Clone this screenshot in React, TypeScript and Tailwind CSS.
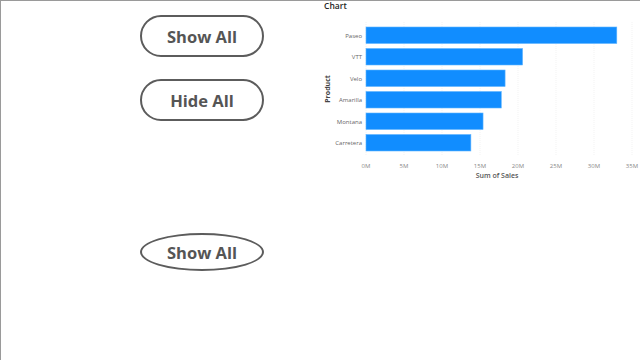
import React from 'react';

const products = [
  { name: 'Paseo', value: 33.0 },
  { name: 'VTT', value: 20.6 },
  { name: 'Velo', value: 18.3 },
  { name: 'Amarilla', value: 17.8 },
  { name: 'Montana', value: 15.4 },
  { name: 'Carretera', value: 13.8 },
];

const ticks = [0, 5, 10, 15, 20, 25, 30, 35];
const pxPerM = 7.6;
const x0 = 46;

function SalesChart() {
  return (
    <svg width="320" height="190" viewBox="0 0 320 190" className="block">
      <text x="4" y="9" fontSize="8.5" fontWeight="600" fill="#252423" fontFamily="'Open Sans', sans-serif">
        Chart
      </text>

      {/* gridlines */}
      {ticks.map((t) => (
        <line
          key={t}
          x1={x0 + t * pxPerM}
          x2={x0 + t * pxPerM}
          y1="22"
          y2="156"
          stroke="#f0f0f0"
          strokeWidth="0.8"
          strokeDasharray="1 1"
        />
      ))}

      {products.map((p, i) => {
        const y = 27 + i * 21.5;
        return (
          <g key={p.name}>
            <rect x={x0} y={y} width={p.value * pxPerM} height="16.5" fill="#118dff" stroke="#5fb4ff" strokeWidth="0.6" />
            <text
              x="42"
              y={y + 10.5}
              fontSize="6"
              fill="#666"
              textAnchor="end"
              fontFamily="'Open Sans', sans-serif"
            >
              {p.name}
            </text>
          </g>
        );
      })}

      {ticks.map((t) => (
        <text
          key={t}
          x={x0 + t * pxPerM}
          y="168"
          fontSize="6"
          fill="#888"
          textAnchor="middle"
          fontFamily="'Open Sans', sans-serif"
        >
          {t}M
        </text>
      ))}

      <text x="177" y="178" fontSize="7" fontWeight="600" fill="#555" textAnchor="middle" fontFamily="'Open Sans', sans-serif">
        Sum of Sales
      </text>
      <text
        x="10"
        y="89"
        fontSize="7"
        fontWeight="700"
        fill="#444"
        textAnchor="middle"
        transform="rotate(-90 10 89)"
        fontFamily="'Open Sans', sans-serif"
      >
        Product
      </text>
    </svg>
  );
}

export default function App() {
  return (
    <div className="w-[640px] h-[360px] bg-white border-t border-l border-[#9a9a9a] overflow-hidden flex font-['Open_Sans',sans-serif]">
      <div className="w-[319px] pl-[139px] pt-[14px] flex flex-col">
        <button className="w-[124px] h-[42px] pt-[2px] rounded-full border-2 border-[#5c5c5c] text-[#555] text-[16.5px] font-bold flex items-center justify-center">
          Show All
        </button>
        <button className="mt-[22px] w-[124px] h-[42px] pt-[2px] rounded-full border-2 border-[#5c5c5c] text-[#555] text-[16.5px] font-bold flex items-center justify-center">
          Hide All
        </button>
        <button className="mt-[112px] w-[124px] h-[38px] pt-[2px] rounded-[50%] border-2 border-[#5c5c5c] text-[#555] text-[16.5px] font-bold flex items-center justify-center">
          Show All
        </button>
      </div>
      <div className="-mt-px">
        <SalesChart />
      </div>
    </div>
  );
}
